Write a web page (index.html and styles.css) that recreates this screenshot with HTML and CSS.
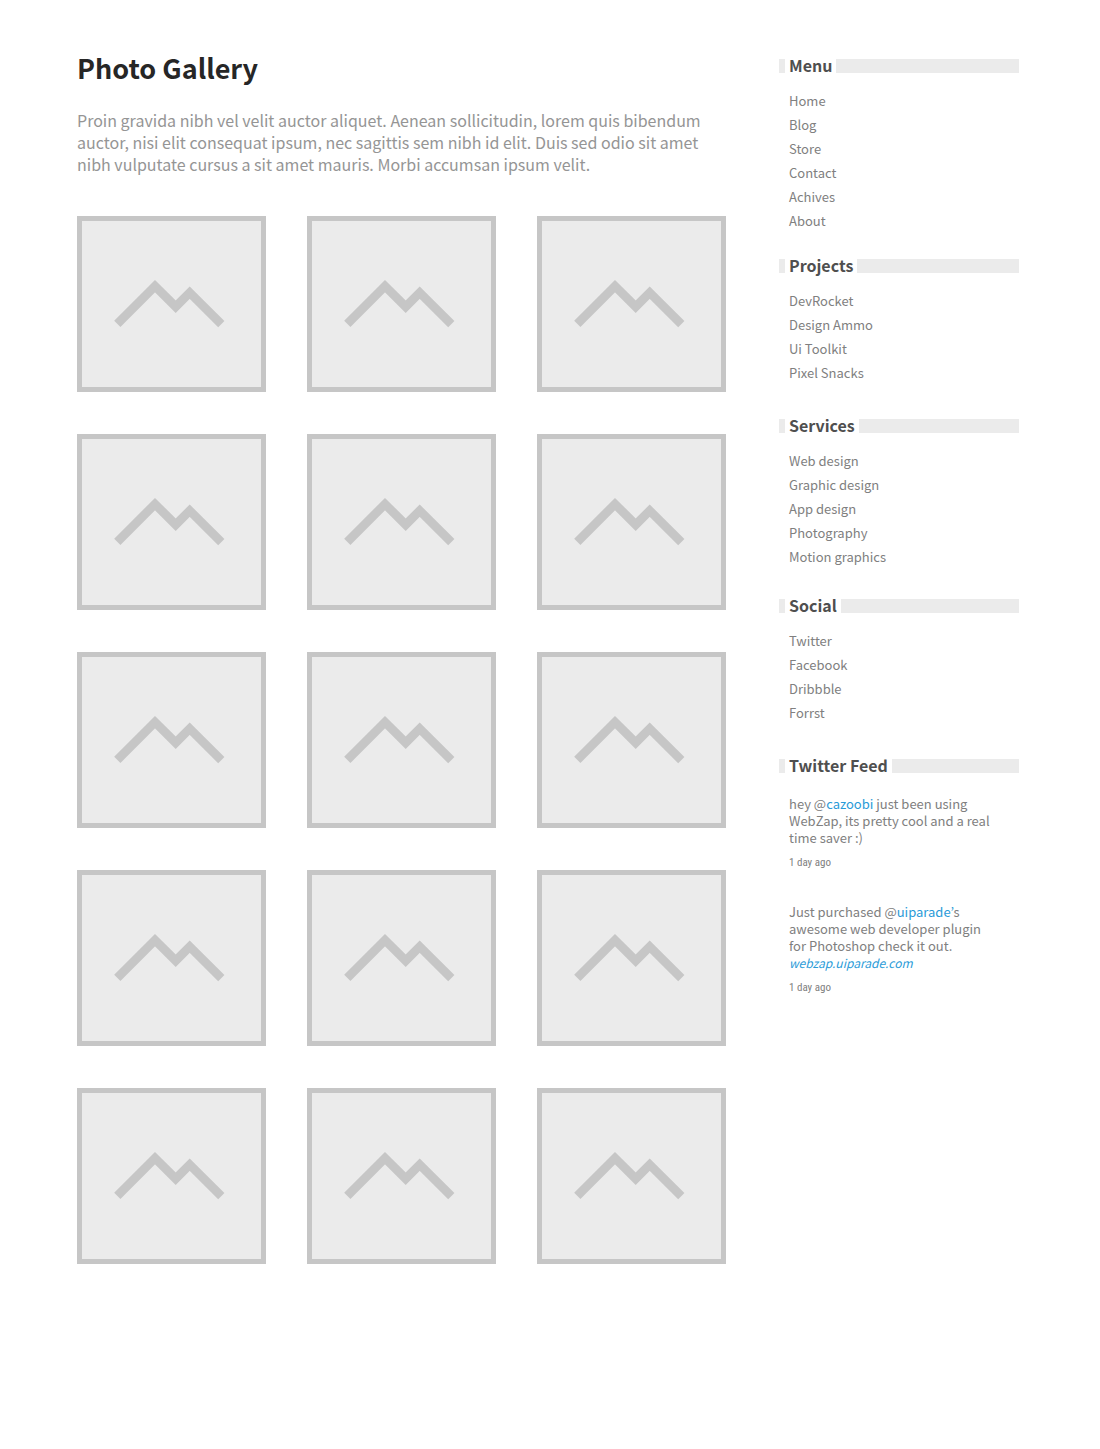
FILE: index.html
```html
<!DOCTYPE html>
<html lang="en">
<head>
<meta charset="utf-8">
<meta name="viewport" content="width=device-width, initial-scale=1">
<title>Photo Gallery</title>
<link rel="stylesheet" href="styles.css">
</head>
<body>
<svg class="sprite" aria-hidden="true">
  <symbol id="mountains" viewBox="0 0 179 166">
    <path d="M35.3 102.9 73 65.1 93.7 85.7 107.7 71.7 139.3 103.1" fill="none" stroke="#c6c6c6" stroke-width="8.8" stroke-miterlimit="10"/>
  </symbol>
</svg>
<div class="page">
  <main class="content">
    <h1 class="title">Photo Gallery</h1>
    <p class="intro">Proin gravida nibh vel velit auctor aliquet. Aenean sollicitudin, lorem quis bibendum auctor, nisi elit consequat ipsum, nec sagittis sem nibh id elit. Duis sed odio sit amet nibh vulputate cursus a sit amet mauris. Morbi accumsan ipsum velit.</p>
    <div class="gallery">
      <div class="photo"><svg><use href="#mountains"/></svg></div>
      <div class="photo"><svg><use href="#mountains"/></svg></div>
      <div class="photo"><svg><use href="#mountains"/></svg></div>
      <div class="photo"><svg><use href="#mountains"/></svg></div>
      <div class="photo"><svg><use href="#mountains"/></svg></div>
      <div class="photo"><svg><use href="#mountains"/></svg></div>
      <div class="photo"><svg><use href="#mountains"/></svg></div>
      <div class="photo"><svg><use href="#mountains"/></svg></div>
      <div class="photo"><svg><use href="#mountains"/></svg></div>
      <div class="photo"><svg><use href="#mountains"/></svg></div>
      <div class="photo"><svg><use href="#mountains"/></svg></div>
      <div class="photo"><svg><use href="#mountains"/></svg></div>
      <div class="photo"><svg><use href="#mountains"/></svg></div>
      <div class="photo"><svg><use href="#mountains"/></svg></div>
      <div class="photo"><svg><use href="#mountains"/></svg></div>
    </div>
  </main>
  <aside class="sidebar">
    <nav class="section section-long">
      <h2 class="heading">Menu</h2>
      <ul class="links">
        <li><a href="#">Home</a></li>
        <li><a href="#">Blog</a></li>
        <li><a href="#">Store</a></li>
        <li><a href="#">Contact</a></li>
        <li><a href="#">Achives</a></li>
        <li><a href="#">About</a></li>
      </ul>
    </nav>
    <nav class="section section-short">
      <h2 class="heading">Projects</h2>
      <ul class="links">
        <li><a href="#">DevRocket</a></li>
        <li><a href="#">Design Ammo</a></li>
        <li><a href="#">Ui Toolkit</a></li>
        <li><a href="#">Pixel Snacks</a></li>
      </ul>
    </nav>
    <nav class="section">
      <h2 class="heading">Services</h2>
      <ul class="links">
        <li><a href="#">Web design</a></li>
        <li><a href="#">Graphic design</a></li>
        <li><a href="#">App design</a></li>
        <li><a href="#">Photography</a></li>
        <li><a href="#">Motion graphics</a></li>
      </ul>
    </nav>
    <nav class="section section-short">
      <h2 class="heading">Social</h2>
      <ul class="links">
        <li><a href="#">Twitter</a></li>
        <li><a href="#">Facebook</a></li>
        <li><a href="#">Dribbble</a></li>
        <li><a href="#">Forrst</a></li>
      </ul>
    </nav>
    <section class="feed">
      <h2 class="heading">Twitter Feed</h2>
      <article class="tweet">
        <p>hey @<a href="#">cazoobi</a> just been using WebZap, its pretty cool and a real time saver :)</p>
        <time class="age">1 day ago</time>
      </article>
      <article class="tweet">
        <p>Just purchased @<a href="#">uiparade’</a>s awesome web developer plugin for Photoshop check it out. <a class="site" href="#">webzap.uiparade.com</a></p>
        <time class="age">1 day ago</time>
      </article>
    </section>
  </aside>
</div>
</body>
</html>
```

FILE: styles.css
```css
* {
  box-sizing: border-box;
}

body {
  margin: 0;
  background: #fff;
  color: #808080;
  font-family: "Noto Sans CJK KR", "Noto Sans", sans-serif;
}

h1, h2, p, ul {
  margin: 0;
  padding: 0;
}

a {
  color: inherit;
  text-decoration: none;
}

.sprite {
  display: none;
}

.page {
  display: flex;
  align-items: flex-start;
  gap: 53px;
  padding: 50px 81px 185px 77px;
}

.content {
  flex: 1;
  min-width: 0;
}

.title {
  color: #262626;
  font-size: 27px;
  line-height: 36px;
  font-weight: 700;
}

.intro {
  margin: 23px 0 41px;
  color: #959595;
  font-size: 16px;
  line-height: 22px;
}

.gallery {
  display: grid;
  grid-template-columns: repeat(3, 1fr);
  gap: 42px 41px;
}

.photo {
  aspect-ratio: 189 / 176;
  border: 5px solid #c6c6c6;
  background: #ebebeb;
}

.photo svg {
  display: block;
  width: 100%;
  height: 100%;
}

.sidebar {
  flex: 0 0 240px;
  padding-top: 5px;
}

.section {
  margin-bottom: 26px;
}

.section-long {
  margin-bottom: 22px;
}

.section-short {
  margin-bottom: 30px;
}

.heading {
  display: flex;
  align-items: flex-start;
  gap: 4px;
  color: #4f4f4f;
  font-size: 16px;
  line-height: 20px;
  font-weight: 700;
}

.heading::before,
.heading::after {
  content: "";
  width: 6px;
  height: 14px;
  margin-top: 4px;
  background: #ebebeb;
}

.heading::after {
  flex: 1;
}

.links {
  margin-top: 14px;
  padding-left: 10px;
  list-style: none;
  font-size: 13px;
  line-height: 24px;
}

.tweet {
  margin-top: 20px;
  padding: 0 28px 0 10px;
  font-size: 13px;
  line-height: 17px;
}

.tweet + .tweet {
  margin-top: 32px;
}

.tweet a {
  color: #2a9bd8;
}

.tweet .site {
  display: block;
  font-size: 12px;
  font-style: italic;
}

.age {
  display: block;
  margin-top: 8px;
  font-family: "Roboto Condensed", "Noto Sans CJK KR", sans-serif;
  font-size: 11px;
}
```
